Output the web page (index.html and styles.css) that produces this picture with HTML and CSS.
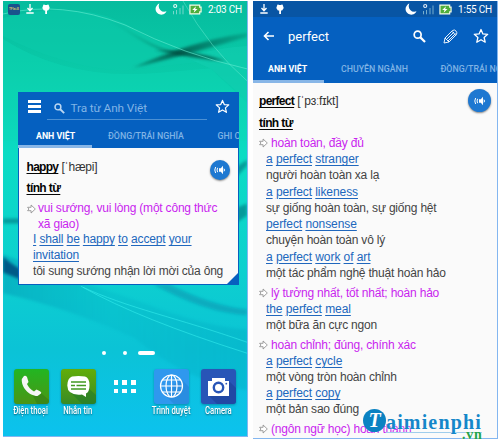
FILE: index.html
```html
<!DOCTYPE html>
<html lang="vi">
<head>
<meta charset="utf-8">
<title>Từ điển Anh Việt</title>
<link rel="stylesheet" href="styles.css">
</head>
<body>
<svg class="defs" aria-hidden="true">
  <symbol id="moon" viewBox="0 0 12 12"><path d="M4.4.6A5.7 5.7 0 1 0 11.5 8.3 5.6 5.6 0 0 1 4.4.6z" fill="#fff"/></symbol>
  <symbol id="signal" viewBox="0 0 12 12"><circle cx="3.2" cy="3" r="1.5" fill="none" stroke="#fff" stroke-opacity=".85" stroke-width="1.2"/><path d="M1.5 8v3.3M4.5 7v4.3M8 5v6.3M11 2.5v8.8" stroke="#bfe9ea" stroke-opacity=".6"/></symbol>
  <symbol id="battery" viewBox="0 0 14 11"><path d="M1 .7h10.500v2.300H13v5h-1.500v2.300H1z" fill="#4fae3c" stroke="#f4fbe8" stroke-width="1.300"/><path d="M7.500 2L3.500 6h2.400L5 9l4.200-4H6.700z" fill="#fff"/></symbol>
  <symbol id="download" viewBox="0 0 8 10"><path d="M4 0v6M1.500 4L4 6.700 6.500 4M.3 9h7.400" fill="none" stroke="#fff" stroke-width="1.300"/></symbol>
  <symbol id="plug" viewBox="0 0 8 10"><path d="M1.300 1L2 .3l.8.700h2.400L6 .3l.7.700 1 3-1.600 2.400H5V10H3.200V6.400H1.900L.3 4z" fill="#fff"/></symbol>
  <symbol id="search" viewBox="0 0 12 12"><circle cx="4.300" cy="4.300" r="3.200" fill="none" stroke="currentColor" stroke-width="1.600"/><path d="M6.800 6.800l4.300 4.300" stroke="currentColor" stroke-width="2"/></symbol>
  <symbol id="star" viewBox="0 0 16 16"><path d="M8 1.500l1.900 4.400 4.800.4-3.600 3.200 1.100 4.700L8 11.700l-4.200 2.500 1.100-4.700-3.600-3.200 4.800-.4z" fill="none" stroke="#fff" stroke-width="1.300" stroke-linejoin="round"/></symbol>
  <symbol id="speaker" viewBox="0 0 12 12"><path d="M5 4.300h1.800L9 1.800v8.400L6.800 7.700H5zM9.700 4l1.500 2-1.500 2z" fill="#fff"/><path d="M3.600 3.800Q2.500 6 3.600 8.200M1.600 3Q0 6 1.600 9" fill="none" stroke="#fff" stroke-width="1"/></symbol>
  <symbol id="arrow" viewBox="0 0 9 10"><path d="M.6 3.300h3.500V1l4.200 4-4.200 4V6.700H.6L2 5z" fill="#fff" stroke="#888" stroke-width=".8"/></symbol>
</svg>

<main class="screens">
  <section class="phone home">
    <svg class="wallpaper" viewBox="0 0 244 436" preserveAspectRatio="none" aria-hidden="true">
      <defs>
        <linearGradient id="bg" x1="0" y1="0" x2="0" y2="1"><stop offset="0" stop-color="#06bc9e"/><stop offset=".17" stop-color="#0acba9"/><stop offset=".35" stop-color="#0bdcc4"/><stop offset=".62" stop-color="#0dd0cf"/><stop offset=".8" stop-color="#0bc3d6"/><stop offset="1" stop-color="#0cc2ee"/></linearGradient>
        <linearGradient id="sweep" x1="0" y1="0" x2="1" y2="1"><stop offset="0" stop-color="#16dcbb" stop-opacity=".1"/><stop offset=".55" stop-color="#049478" stop-opacity=".35"/><stop offset="1" stop-color="#02604f" stop-opacity=".8"/></linearGradient>
        <linearGradient id="wing" x1="0" x2="1"><stop offset="0" stop-color="#036d58" stop-opacity=".6"/><stop offset=".4" stop-color="#00493d" stop-opacity=".75"/><stop offset="1" stop-color="#088b75" stop-opacity=".5"/></linearGradient>
        <linearGradient id="low" x1="0" x2="1"><stop offset="0" stop-color="#0084ab" stop-opacity=".65"/><stop offset=".45" stop-color="#03acc1" stop-opacity=".4"/><stop offset="1" stop-color="#0aa4bb" stop-opacity=".55"/></linearGradient>
        <filter id="soft" x="-20%" y="-20%" width="140%" height="140%"><feGaussianBlur stdDeviation="1.500"/></filter>
      </defs>
      <path d="M0 0h244v436H0z" fill="url(#bg)"/>
      <path d="M0 17Q75 -2 125 24Q165 50 207 60L120 70Q60 66 0 35z" fill="#0cc9aa" opacity=".6"/>
      <path d="M75 10C115 13 133 49 179 53Q151 48 118 24Q98 11 75 10z" fill="url(#sweep)" filter="url(#soft)"/>
      <path d="M0 38Q65 80 156 72T208 68L244 102V140H0z" fill="#0edbb8" opacity=".35"/>
      <path d="M208 68L244 99V45Q220 46 181 56z" fill="#12ceb0" opacity=".55"/>
      <path d="M130 67Q185 41 244 32V36Q197 50 130 67z" fill="url(#wing)" filter="url(#soft)"/>
      <path d="M152 49Q190 49 223 60Q190 58 152 49z" fill="#00483c" opacity=".75" filter="url(#soft)"/>
      <path d="M0 13Q58 -1 122 24Q181 54 244 68" fill="none" stroke="#65edd1" stroke-width=".6"/>
      <path d="M180 0Q207 48 244 80" fill="none" stroke="#68ead1" stroke-width=".5"/>
      <path d="M0 218h18v5H0zM234 166l10-7v6l-10 11zM234 207l10-4v12l-10 7z" fill="#037a83" opacity=".65" filter="url(#soft)"/>
      <path d="M0 254Q57 274 82 283L130 299Q205 328 244 329V390Q184 382 132 338Q63 307 0 293z" fill="url(#low)" opacity=".55" filter="url(#soft)"/>
      <path d="M0 256Q10 265 17 268V279L0 272z" fill="#025a87" filter="url(#soft)"/>
      <path d="M166 284Q210 306 244 309V315Q203 313 150 284z" fill="#078eac" opacity=".5" filter="url(#soft)"/>
      <path d="M78 286C125 308 173 317 244 342M80 287Q137 319 244 353" fill="none" stroke="#36efee" stroke-width=".7" opacity=".8"/>
    </svg>
    <header class="status">
      <span class="appbadge">TFlat.E</span>
      <svg class="dl"><use href="#download"/></svg><svg class="pl"><use href="#plug"/></svg>
      <span class="grow"></span>
      <svg class="mn"><use href="#moon"/></svg><svg class="sg"><use href="#signal"/></svg><svg class="bt"><use href="#battery"/></svg>
      <time>2:03 CH</time>
    </header>
    <article class="widget">
      <div class="searchbar">
        <span class="menu"><i></i><i></i><i></i></span>
        <div class="field"><svg><use href="#search"/></svg><span>Tra từ Anh Việt</span></div>
        <svg class="star"><use href="#star"/></svg>
      </div>
      <nav class="tabs"><b class="on">ANH VIỆT</b><b>ĐỒNG/TRÁI NGHĨA</b><b>GHI CHÚ</b></nav>
      <div class="entry">
        <div class="head"><span><strong>happy</strong> [ˈhæpi]</span><span class="speak"><svg><use href="#speaker"/></svg></span></div>
        <div class="pos"><strong>tính từ</strong></div>
        <div class="def"><svg><use href="#arrow"/></svg><span>vui sướng, vui lòng (một công thức<br>xã giao)</span></div>
        <div class="ex"><p class="en"><a>I</a> <a>shall</a> <a>be</a> <a>happy</a> <a>to</a> <a>accept</a> <a>your</a><br><a>invitation</a></p><p>tôi sung sướng nhận lời mời của ông</p></div>
      </div>
      <span class="corner"></span>
    </article>
    <div class="pager"><i></i><i></i><i class="now"></i></div>
    <footer class="dock">
      <div class="app"><svg viewBox="0 0 35 35"><defs><linearGradient id="g1" x2="0" y2="1"><stop stop-color="#22b622"/><stop offset="1" stop-color="#4b9515"/></linearGradient></defs><rect width="35" height="35" rx="3" fill="url(#g1)"/><path d="M27 24l8 7v1q0 3-3 3h-9l-4-8z" fill="#367d17" opacity=".6"/><path d="M10 7L7.800 10C7 18 15 27 23.500 27L27 24.500Q28 23.500 26 22.200L22.500 20.500L20 22.500C17 21 14 17.500 13 15L14.500 13L13 8Q11.500 6 10 7z" fill="#f6f6f6"/></svg><span>Điện thoại</span></div>
      <div class="app"><svg viewBox="0 0 35 35"><defs><linearGradient id="g2" x2="0" y2="1"><stop stop-color="#62ad09"/><stop offset="1" stop-color="#398b24"/></linearGradient></defs><rect width="35" height="35" rx="3" fill="url(#g2)"/><path d="M8 22l13 13h11q3 0 3-3v-6l-9-8z" fill="#207829" opacity=".5"/><path d="M11 7.500Q17.500 6.500 24 7.500Q28.500 9 28.500 16T25 24.500V28L21 25.500Q6.500 27 6.300 16.500Q6.500 9 11 7.500z" fill="#fff"/><path d="M10 13h15M10 16.500h4M15.500 16.500h9.500M10 20h15" stroke="#429922" stroke-width="1.300"/></svg><span>Nhắn tin</span></div>
      <div class="launcher"><i></i><i></i><i></i><i></i><i></i><i></i></div>
      <div class="app"><svg viewBox="0 0 35 35"><rect width="35" height="35" rx="3" fill="#2f98ee"/><path d="M9 24l11 11h12q3 0 3-3V18l-8-8z" fill="#217ccd" opacity=".4"/><g fill="none" stroke="#fff" stroke-width="1.200"><circle cx="17.500" cy="17" r="11"/><ellipse cx="17.500" cy="17" rx="5.500" ry="11"/><path d="M17.500 6v22M6.500 17h22M9 11h17M9 23h17"/></g></svg><span>Trình duyệt</span></div>
      <div class="app"><svg viewBox="0 0 35 35"><rect width="35" height="35" rx="3" fill="#2855b7"/><path d="M8 27l8 8h16q3 0 3-3V19l-7-7z" fill="#193b92" opacity=".5"/><path d="M7 12h4V9h13v3h4v15H7z" fill="#fff"/><circle cx="17.500" cy="18.500" r="4.700" fill="#fff" stroke="#2855b7" stroke-width="2.400"/><circle cx="25.300" cy="14.700" r=".9" fill="#2855b7"/></svg><span>Camera</span></div>
    </footer>
  </section>

  <section class="phone dictionary">
    <header class="status">
      <svg class="dl"><use href="#download"/></svg><svg class="pl"><use href="#plug"/></svg>
      <span class="grow"></span>
      <svg class="mn"><use href="#moon"/></svg><svg class="sg"><use href="#signal"/></svg><svg class="bt"><use href="#battery"/></svg>
      <time>1:55 CH</time>
    </header>
    <div class="appbar">
      <svg class="back" viewBox="0 0 12 10"><path d="M11 5H2M5.500 1L1.500 5l4 4" fill="none" stroke="#fff" stroke-width="1.600"/></svg>
      <h1>perfect</h1>
      <svg class="find"><use href="#search"/></svg>
      <svg class="pencil" viewBox="0 0 15 15"><path d="M1 14l1-5L9.500 1.500q2-1.300 3.500.5t.5 3.500L6 13zM2 9l4 4M3.500 10.500l7.500-7.500M5 12l7.500-7.500M8.800 2.200l4 4" fill="none" stroke="#fff" stroke-width=".9"/></svg>
      <svg class="star"><use href="#star"/></svg>
    </div>
    <nav class="tabs"><b class="on">ANH VIỆT</b><b>CHUYÊN NGÀNH</b><b>ĐỒNG/TRÁI NGHĨA</b></nav>
    <div class="entry">
      <div class="head"><span><strong>perfect</strong> [ˈpɜːfɪkt]</span><span class="speak"><svg><use href="#speaker"/></svg></span></div>
      <div class="pos"><strong>tính từ</strong></div>
      <div class="def"><svg><use href="#arrow"/></svg><span>hoàn toàn, đầy đủ</span></div>
      <div class="ex"><p class="en"><a>a</a> <a>perfect</a> <a>stranger</a></p><p>người hoàn toàn xa lạ</p></div>
      <div class="ex"><p class="en"><a>a</a> <a>perfect</a> <a>likeness</a></p><p>sự giống hoàn toàn, sự giống hệt</p></div>
      <div class="ex"><p class="en"><a>perfect</a> <a>nonsense</a></p><p>chuyện hoàn toàn vô lý</p></div>
      <div class="ex"><p class="en"><a>a</a> <a>perfect</a> <a>work</a> <a>of</a> <a>art</a></p><p>một tác phẩm nghệ thuật hoàn hảo</p></div>
      <div class="def next"><svg><use href="#arrow"/></svg><span>lý tưởng nhất, tốt nhất; hoàn hảo</span></div>
      <div class="ex"><p class="en"><a>the</a> <a>perfect</a> <a>meal</a></p><p>một bữa ăn cực ngon</p></div>
      <div class="def next"><svg><use href="#arrow"/></svg><span>hoàn chỉnh; đúng, chính xác</span></div>
      <div class="ex"><p class="en"><a>a</a> <a>perfect</a> <a>cycle</a></p><p>một vòng tròn hoàn chỉnh</p></div>
      <div class="ex"><p class="en"><a>a</a> <a>perfect</a> <a>copy</a></p><p>một bản sao đúng</p></div>
      <div class="def next"><svg><use href="#arrow"/></svg><span>(ngôn ngữ học) hoàn thành</span></div>
    </div>
  </section>
</main>
<div class="brand"><span class="ball">T</span><span class="name">aimienphi</span><span class="tld">.vn</span></div>
</body>
</html>
```
FILE: styles.css
```css
* { box-sizing: border-box; }
body { margin: 0; width: 500px; height: 441px; overflow: hidden; position: relative; background: #fff; font-family: "Liberation Sans", sans-serif; }
svg { display: block; flex: none; overflow: visible; }
p, h1 { margin: 0; }
.defs { position: absolute; width: 0; height: 0; }
.screens { display: flex; gap: 5px; padding: 1px 0 0 3px; }
.phone { width: 245px; position: relative; overflow: hidden; border-right: 1px solid #83b6f0; border-bottom: 1px solid #83b6f0; }
.home { height: 436px; }
.dictionary { height: 438px; background: #fafafa; }
.wallpaper { position: absolute; inset: 0; width: 100%; height: 100%; }
.status { position: relative; height: 16px; display: flex; align-items: center; padding: 0 5px 0 7px; color: #fff; font: 10px Roboto, sans-serif; }
.grow { flex: 1; }
.status time { width: 34px; white-space: nowrap; letter-spacing: -.2px; }
.home .status { padding-left: 5px; }
.appbadge { width: 12px; height: 11px; border-radius: 2px; background: #1a528c; color: #dfcd68; font: bold 3px/10px "Liberation Sans", sans-serif; text-align: center; margin-right: 6px; overflow: hidden; }
.dl { width: 8px; height: 10px; margin-right: 8px; }
.pl { width: 8px; height: 10px; }
.mn { width: 12px; height: 12px; margin-right: 5px; }
.sg { width: 12px; height: 12px; margin-right: 5px; }
.bt { width: 13px; height: 11px; margin-right: 6px; }

.widget { position: relative; margin: 75px 0 0 15px; width: 221px; height: 193px; background: #fafafa; border: 1px solid #0760bf; border-top: 0; }
.searchbar { height: 32px; background: #0560c0; margin: 0 -1px; display: flex; padding-left: 10px; }
.menu { width: 13px; margin: 8px 6px 0 0; display: flex; flex-direction: column; gap: 2.500px; }
.menu i { height: 2.500px; background: #fff; }
.field { width: 160px; height: 21px; margin-top: 7px; display: flex; align-items: center; padding: 0 0 2px 7px; color: #80b4e6; border-bottom: 1px solid #4b90d4; font: 11.800px Roboto, sans-serif; letter-spacing: -.1px; margin-left: -.5px; }
.field svg { width: 11px; height: 11px; margin-right: 6px; color: #bcd7f2; }
.searchbar .star { width: 15px; height: 15px; margin: 7px 0 0 8px; }
.tabs { display: flex; overflow: hidden; white-space: nowrap; background: #0560c0; color: #7fb3e5; font: 8.800px Roboto, sans-serif; }
.tabs b { flex: none; font-weight: 500; }
.tabs .on { color: #fff; font-weight: 700; }
.widget .tabs { height: 24px; line-height: 25px; margin: 0 -1px; }
.widget .on { width: 74px; padding-left: 18px; border-bottom: 3px solid #88b6e7; margin-right: 16px; }
.widget .tabs b:nth-child(2) { width: 109.500px; }
.entry { font-size: 12px; letter-spacing: -.2px; color: #444; }
.head, .pos { color: #333; }
strong { color: #050505; letter-spacing: -.7px; text-decoration: underline; text-underline-offset: 2px; text-decoration-thickness: 1px; }
.pos strong { letter-spacing: -.6px; }
.head { display: flex; justify-content: space-between; }
.speak { border-radius: 50%; background: #1e78d1; display: grid; place-items: center; box-shadow: 0 1px 2px #0007; }
.speak svg { width: 12px; height: 12px; }
.def { display: flex; color: #c925ef; white-space: nowrap; }
.def svg { width: 9px; height: 10px; flex: none; }
.ex { white-space: nowrap; }
.en { letter-spacing: -.08px; }
a { color: #2067bd; text-decoration: underline; text-underline-offset: 1.500px; text-decoration-thickness: 1px; }
.widget .entry { padding: 9px 0 0 7.500px; line-height: 15.700px; }
.widget .en { letter-spacing: -.14px; }
.widget .head { height: 22px; line-height: 20px; padding-right: 8px; }
.widget .speak { width: 20px; height: 20px; margin-top: 3px; }
.widget .pos { height: 22px; line-height: 19px; }
.widget .def svg { margin: 3px 2.500px 0 0; }
.widget .ex { padding-left: 6.500px; }
.corner { position: absolute; right: 0; bottom: 0; border-left: 11px solid transparent; border-bottom: 11px solid #0760bf; }

.pager { position: relative; height: 4px; margin: 66px 0 0 99px; display: flex; align-items: center; }
.pager i { width: 4px; height: 4px; border-radius: 2px; background: #fff; margin-right: 16.500px; }
.pager i:nth-child(2) { margin-right: 11px; }
.pager .now { width: 17px; }
.dock { position: relative; display: flex; margin: 14px 0 0 10.500px; }
.app { width: 35px; display: flex; flex-direction: column; align-items: center; color: #fff; font: 500 10px/12px Roboto, sans-serif; text-shadow: 0 1px 2px #045f79; }
.app + .app { margin-left: 12px; }
.app svg { width: 35px; height: 35px; filter: drop-shadow(0 1px 1px #00608088); }
.app span { white-space: nowrap; margin-top: 1px; transform: scaleX(.77); }
.launcher { width: 22px; height: 13px; margin: 11px 18px 0; display: grid; grid-template-columns: repeat(3, 4.500px); gap: 4px 4.250px; }
.launcher i { width: 4.500px; height: 4.500px; background: #fff; }

.dictionary .status { background: #0855a4; }
.appbar { height: 38px; background: #0560c0; display: flex; align-items: center; color: #fff; padding: 0 8px 0 10px; }
.back { width: 12px; height: 10px; }
.appbar h1 { flex: 1; margin-left: 13px; font: 13px Roboto, sans-serif; }
.find { width: 13px; height: 13px; margin-right: 17px; }
.pencil { width: 15px; height: 15px; margin-right: 15px; }
.appbar .star { width: 16px; height: 16px; }
.dictionary .tabs { height: 28px; line-height: 28px; }
.dictionary .on { width: 71px; padding-left: 15px; border-bottom: 3px solid #88b6e7; margin-right: 17px; }
.dictionary .tabs b:nth-child(2) { width: 99.500px; }
.dictionary .entry { padding: 6px 0 0 6px; line-height: 16px; }
.dictionary .head { height: 24px; line-height: 24px; padding-right: 6px; }
.dictionary .speak { width: 23px; height: 23px; }
.dictionary .pos { height: 22px; line-height: 21px; }
.dictionary .def { height: 16px; }
.dictionary .def svg { margin: 3px 3px 0 0; }
.dictionary .next { margin-top: 3.400px; }
.dictionary .ex { padding-left: 7px; height: 32.600px; }

.brand { position: absolute; left: 363px; top: 409px; width: 120px; height: 32px; display: flex; color: #1587c9; font-family: "Liberation Serif", serif; font-weight: bold; }
.ball { width: 23px; height: 23px; flex: none; border-radius: 50%; background: #0a82c2; color: #fff; text-align: center; font: italic bold 20px/23px "Liberation Serif", serif; }
.name { font-size: 20px; line-height: 27px; letter-spacing: 1.150px; height: 24px; text-shadow: 0 0 2px #fff; border-bottom: 1px solid #9fcdec; }
.tld { position: absolute; left: 99px; top: 18px; color: #24a44a; font-size: 14px; line-height: 16px; letter-spacing: .7px; text-shadow: 0 0 2px #fff; }
```
